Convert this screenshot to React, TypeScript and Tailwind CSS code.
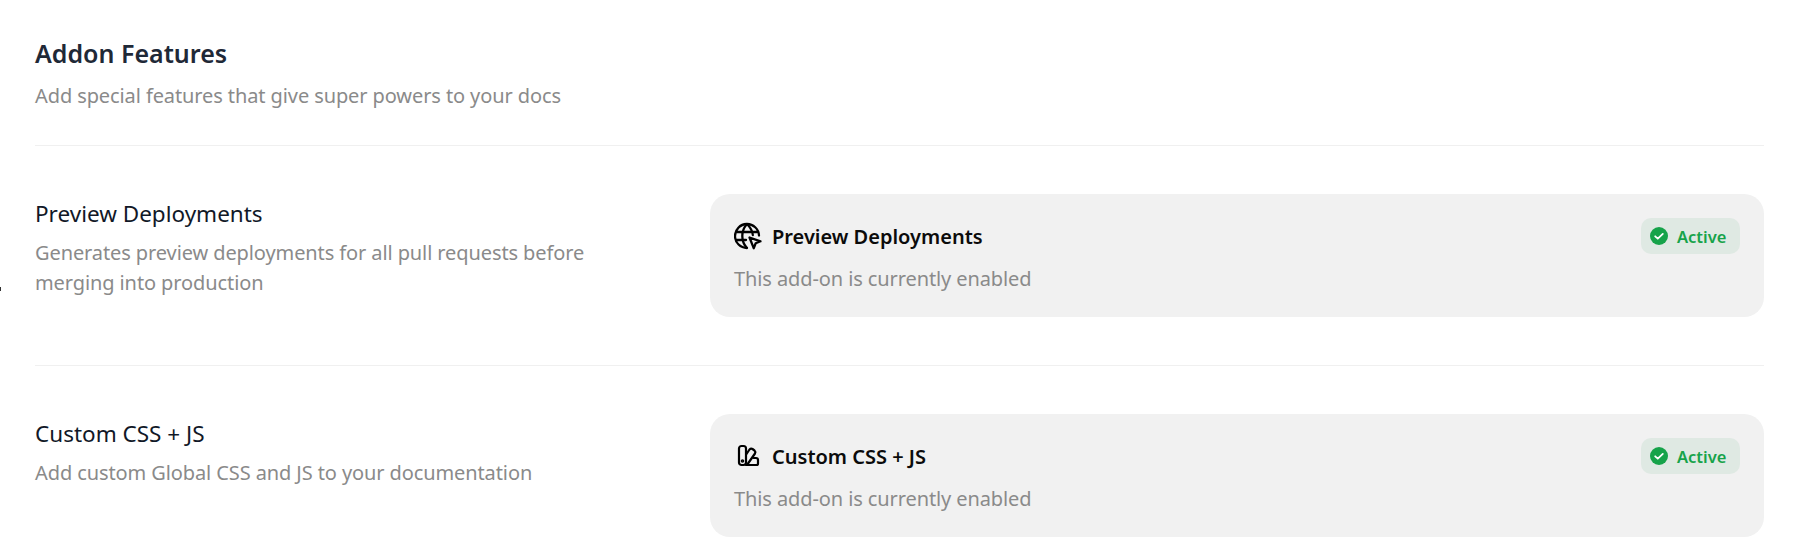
import type { ReactNode } from "react";

const FONT = "font-['Noto_Sans','Open_Sans',sans-serif]";

function GlobeCursorIcon() {
  return (
    <svg viewBox="0 0 28 28" fill="none" stroke="currentColor" strokeWidth="2.300" strokeLinecap="round" strokeLinejoin="round" className="h-[28px] w-[28px] shrink-0">
      <path d="M25 13.500A12 12 0 1 0 13 26" />
      <path d="M2.500 10h21M2.500 18H12" />
      <path d="M12.500 2.500c-5.600 6.500-5.600 16.500 0 23" />
      <path d="M13.500 2.500c3.300 3.500 5 7 5.300 10.500" />
      <path d="M15.500 15.500l11 3.800-4.800 2-2 4.900z" />
    </svg>
  );
}

function SwatchIcon() {
  return (
    <svg viewBox="0 0 28 28" fill="none" stroke="currentColor" strokeWidth="2.200" strokeLinecap="round" strokeLinejoin="round" className="h-[28px] w-[28px] shrink-0">
      <rect x="5" y="4" width="7" height="19" rx="2.500" />
      <circle cx="8.500" cy="19" r="0.700" fill="currentColor" />
      <path d="M12.500 12l3-4.500q1.500-1.500 3-.5l2 1.500q1.500 1.500.5 3L14 21.500" />
      <path d="M12 23h10.500q1.500 0 1.500-1.500V18q0-2-2-2h-2.500" />
    </svg>
  );
}

function ActiveBadge() {
  return (
    <div className="flex h-[36px] w-[99px] items-center gap-[9px] rounded-[10px] bg-[#dfe9e3] pl-[9px]">
      <svg viewBox="0 0 18 18" className="h-[18px] w-[18px] shrink-0">
        <circle cx="9" cy="9" r="9" fill="#16a34a" />
        <path d="M5.200 9.300l2.600 2.400 5-4.800" fill="none" stroke="#fff" strokeWidth="1.800" strokeLinecap="round" strokeLinejoin="round" />
      </svg>
      <span className="pt-[2px] text-[16.500px] font-semibold text-[#16a34a]">Active</span>
    </div>
  );
}

function AddonRow({ title, desc, icon, height }: { title: string; desc: ReactNode; icon: ReactNode; height: string }) {
  return (
    <div className={`flex items-start ${height}`}>
      <div className="w-[675px] shrink-0 pt-[4px]">
        <h3 className="text-[22.500px] leading-[32px] text-[#111827]">{title}</h3>
        <p className="mt-[8px] text-[20px] leading-[30px] tracking-[-0.1px] text-[#8a8a8a]">{desc}</p>
      </div>
      <div className="flex h-[123px] flex-1 flex-col rounded-[20px] bg-[#f1f1f1] px-[24px] pt-[24px]">
        <div className="flex items-start justify-between">
          <div className="flex h-[36px] items-center gap-[10px]">
            {icon}
            <span className="pt-[2px] text-[20px] font-semibold leading-[36px] text-[#0b0b0b]">{title}</span>
          </div>
          <ActiveBadge />
        </div>
        <p className="mt-[10px] text-[20px] leading-[30px] tracking-[-0.1px] text-[#8a8a8a]">This add-on is currently enabled</p>
      </div>
    </div>
  );
}

export default function App() {
  return (
    <div className={`relative h-[560px] overflow-hidden bg-white pl-[35px] pr-[41px] pt-[36px] ${FONT}`}>
      <div className="absolute left-0 top-[287px] h-[4px] w-px bg-[#333333]" />
      <h2 className="text-[25px] font-semibold leading-[34px] text-[#1f2937]">Addon Features</h2>
      <p className="mt-[11px] text-[20px] leading-[30px] tracking-[-0.1px] text-[#8a8a8a]">Add special features that give super powers to your docs</p>
      <div className="mb-[48px] mt-[34px] h-px bg-[#f0f0f0]" />
      <AddonRow title="Preview Deployments" height="h-[171px]" icon={<GlobeCursorIcon />} desc={<>Generates preview deployments for all pull requests before<br />merging into production</>} />
      <div className="mb-[48px] h-px bg-[#f0f0f0]" />
      <AddonRow title="Custom CSS + JS" height="h-[123px]" icon={<SwatchIcon />} desc="Add custom Global CSS and JS to your documentation" />
    </div>
  );
}
